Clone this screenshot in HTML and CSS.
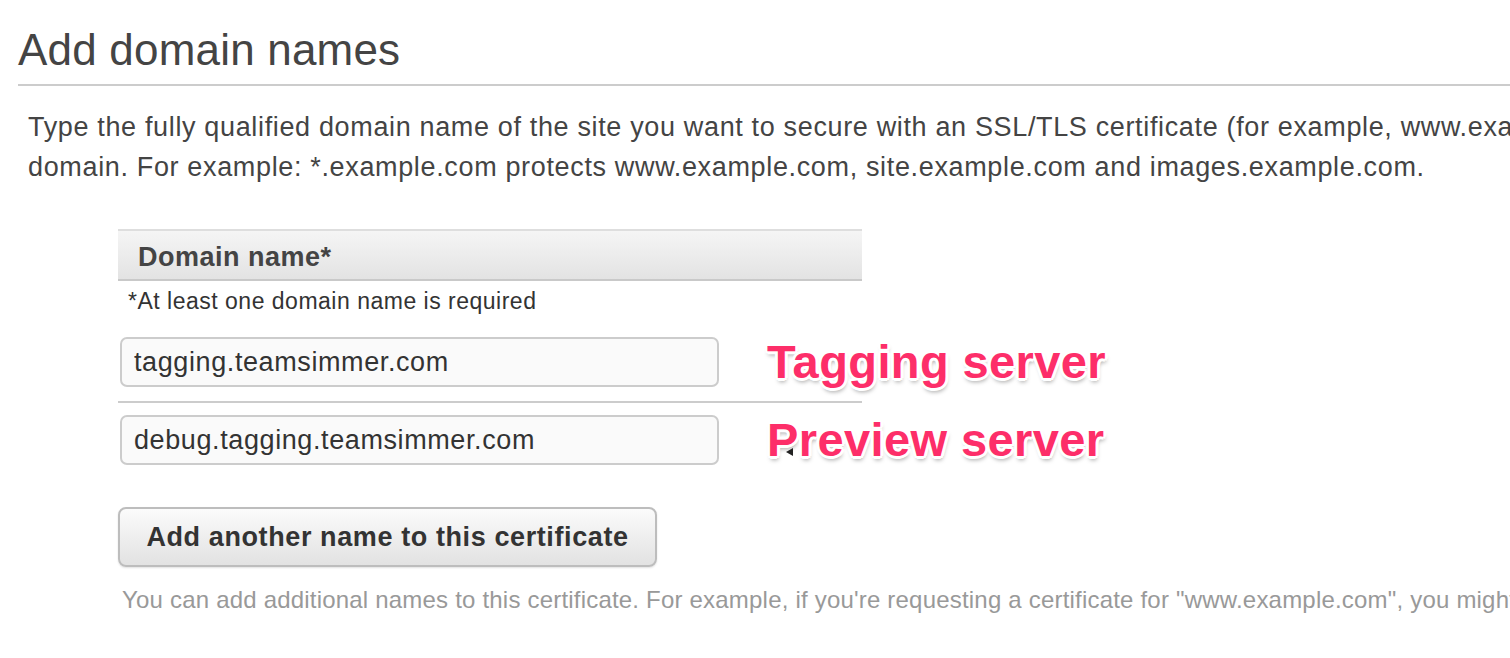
FILE: index.html
```html
<!DOCTYPE html>
<html>
<head>
<meta charset="utf-8">
<link rel="stylesheet" href="styles.css">
</head>
<body>
<div class="page">
  <h1 class="title">Add domain names</h1>
  <div class="rule"></div>
  <p class="intro">Type the fully qualified domain name of the site you want to secure with an SSL/TLS certificate (for example, www.example.com). Use an asterisk (*) to request a wildcard certificate to protect several sites in the same<br>domain. For example: *.example.com protects www.example.com, site.example.com and images.example.com.</p>

  <div class="table">
    <div class="thead">Domain name*</div>
    <div class="hint">*At least one domain name is required</div>
    <div class="row first">
      <input class="field" type="text" value="tagging.teamsimmer.com">
      <span class="note">Tagging server</span>
    </div>
    <div class="row second">
      <input class="field" type="text" value="debug.tagging.teamsimmer.com">
      <span class="note">Preview server<span class="cursor"></span></span>
    </div>
  </div>

  <button class="add" type="button">Add another name to this certificate</button>
  <p class="help">You can add additional names to this certificate. For example, if you're requesting a certificate for "www.example.com", you might want to add the name "example.com" so that customers can reach your site by either name.</p>
</div>
</body>
</html>
```

FILE: styles.css
```css
html, body {
  margin: 0;
  padding: 0;
  background: #ffffff;
  overflow: hidden;
}

body {
  font-family: "Liberation Sans", Arial, sans-serif;
  color: #444444;
  width: 1510px;
  height: 658px;
}

.page {
  padding-left: 18px;
  padding-top: 24px;
}

.title {
  margin: 0;
  font-size: 44px;
  line-height: 52px;
  font-weight: normal;
  color: #444444;
  letter-spacing: 0.2px;
  white-space: nowrap;
}

.rule {
  margin-top: 8px;
  height: 2px;
  background: #cccccc;
}

.intro {
  margin: 21px 0 0 10px;
  font-size: 27px;
  line-height: 40px;
  letter-spacing: 0.65px;
  white-space: nowrap;
  color: #444444;
}

.table {
  margin: 42px 0 0 100px;
  width: 744px;
}

.thead {
  height: 48px;
  border-top: 2px solid #dedede;
  border-bottom: 2px solid #c9c9c9;
  background: linear-gradient(#f5f5f5, #e3e3e3);
  padding-left: 20px;
  font-weight: bold;
  font-size: 27px;
  letter-spacing: 0.5px;
  line-height: 52px;
  color: #444444;
}

.hint {
  margin-top: 6px;
  padding-left: 10px;
  font-size: 23px;
  letter-spacing: 0.5px;
  line-height: 28px;
  color: #333333;
}

.row {
  display: flex;
  align-items: center;
  padding-left: 2px;
}

.row.first {
  padding-top: 22px;
  padding-bottom: 14px;
  border-bottom: 2px solid #cccccc;
}

.row.second {
  padding-top: 12px;
}

.field {
  flex: none;
  box-sizing: border-box;
  width: 599px;
  height: 50px;
  margin: 0;
  border: 2px solid #cccccc;
  border-radius: 7px;
  background: #fafafa;
  padding: 0 12px;
  font-family: "Liberation Sans", Arial, sans-serif;
  font-size: 27px;
  letter-spacing: 0.6px;
  color: #333333;
  outline: none;
}

.note {
  position: relative;
  flex: none;
  margin-left: 48px;
  white-space: nowrap;
  font-weight: bold;
  font-size: 47px;
  letter-spacing: 0.4px;
  line-height: 50px;
  color: #fd2e69;
  text-shadow:
    3px 0 0 #fff, -3px 0 0 #fff, 0 3px 0 #fff, 0 -3px 0 #fff,
    2px 2px 0 #fff, -2px -2px 0 #fff, 2px -2px 0 #fff, -2px 2px 0 #fff,
    1px 4px 4px rgba(0, 0, 0, 0.35);
}

.cursor {
  position: absolute;
  left: 19px;
  top: 33px;
  width: 0;
  height: 0;
  border-top: 4px solid transparent;
  border-bottom: 4px solid transparent;
  border-right: 7px solid #222;
}

.add {
  display: block;
  margin: 42px 0 0 100px;
  box-sizing: border-box;
  width: 539px;
  height: 60px;
  border: 2px solid #bdbdbd;
  border-radius: 8px;
  background: linear-gradient(#fbfbfb, #e2e2e2);
  box-shadow: 0 1px 2px rgba(0, 0, 0, 0.12);
  font-family: "Liberation Sans", Arial, sans-serif;
  font-weight: bold;
  font-size: 27px;
  letter-spacing: 0.6px;
  color: #333333;
  padding: 0;
}

.help {
  margin: 18px 0 0 104px;
  font-size: 24px;
  letter-spacing: 0.2px;
  line-height: 30px;
  color: #999999;
  white-space: nowrap;
}
```
